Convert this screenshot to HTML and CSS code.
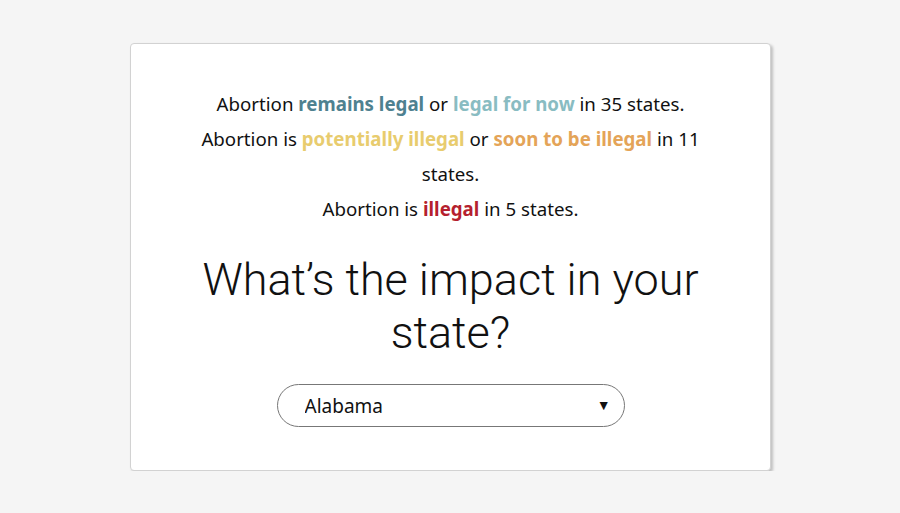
FILE: index.html
```html
<!DOCTYPE html>
<html>
<head>
<meta charset="utf-8">
<link rel="stylesheet" href="styles.css">
</head>
<body>
<div class="page">
  <div class="card">
    <div class="content">
      <p class="summary">
        Abortion <b class="c-legal">remains legal</b> or <b class="c-fornow">legal for now</b> in 35 states.<br>
        Abortion is <b class="c-potential">potentially illegal</b> or <b class="c-soon">soon to be illegal</b> in 11 states.<br>
        Abortion is <b class="c-illegal">illegal</b> in 5 states.
      </p>
      <h1 class="title">What’s the impact in your state?</h1>
      <div class="select-wrap">
        <select class="state-select">
          <option>Alabama</option>
        </select>
        <span class="arrow">▼</span>
      </div>
    </div>
  </div>
</div>
</body>
</html>
```
FILE: styles.css
```css
html, body {
  margin: 0;
  padding: 0;
  background: #f5f5f5;
}
.page {
  display: flex;
  justify-content: center;
  padding-top: 43px;
  padding-left: 1px;
}
.card {
  width: 639px;
  background: #fff;
  border: 1px solid #d2d2d2;
  border-radius: 4px;
  box-shadow: 2px 2px 3px rgba(0,0,0,0.22);
  padding: 42px 0 43px;
  display: flex;
  justify-content: center;
  font-family: "Noto Sans", sans-serif;
  color: #111;
}
.content {
  width: 560px;
  display: flex;
  flex-direction: column;
  align-items: center;
  text-align: center;
}
.summary {
  margin: 0;
  width: 512px;
  font-size: 18.7px;
  line-height: 35px;
}
.summary b { font-weight: 700; }
.c-legal { color: #4e8190; }
.c-fornow { color: #89bcc2; }
.c-potential { color: #e8cc6e; }
.c-soon { color: #e4a458; }
.c-illegal { color: #b51f2f; }
.title {
  margin: 27px 0 0;
  width: 540px;
  font-family: Roboto, "Noto Sans", sans-serif;
  font-size: 45px;
  font-weight: 300;
  line-height: 53px;
}
.select-wrap {
  position: relative;
  margin-top: 25px;
  width: 348px;
}
.state-select {
  appearance: none;
  -webkit-appearance: none;
  width: 348px;
  height: 43px;
  border: 1px solid #777;
  border-radius: 22px;
  background: #fff;
  font-family: "Noto Sans", sans-serif;
  font-size: 19px;
  color: #111;
  padding: 0 0 0 27px;
  outline: none;
}
.arrow {
  position: absolute;
  right: 14px;
  top: 11px;
  font-size: 14px;
  color: #111;
  pointer-events: none;
}
```
